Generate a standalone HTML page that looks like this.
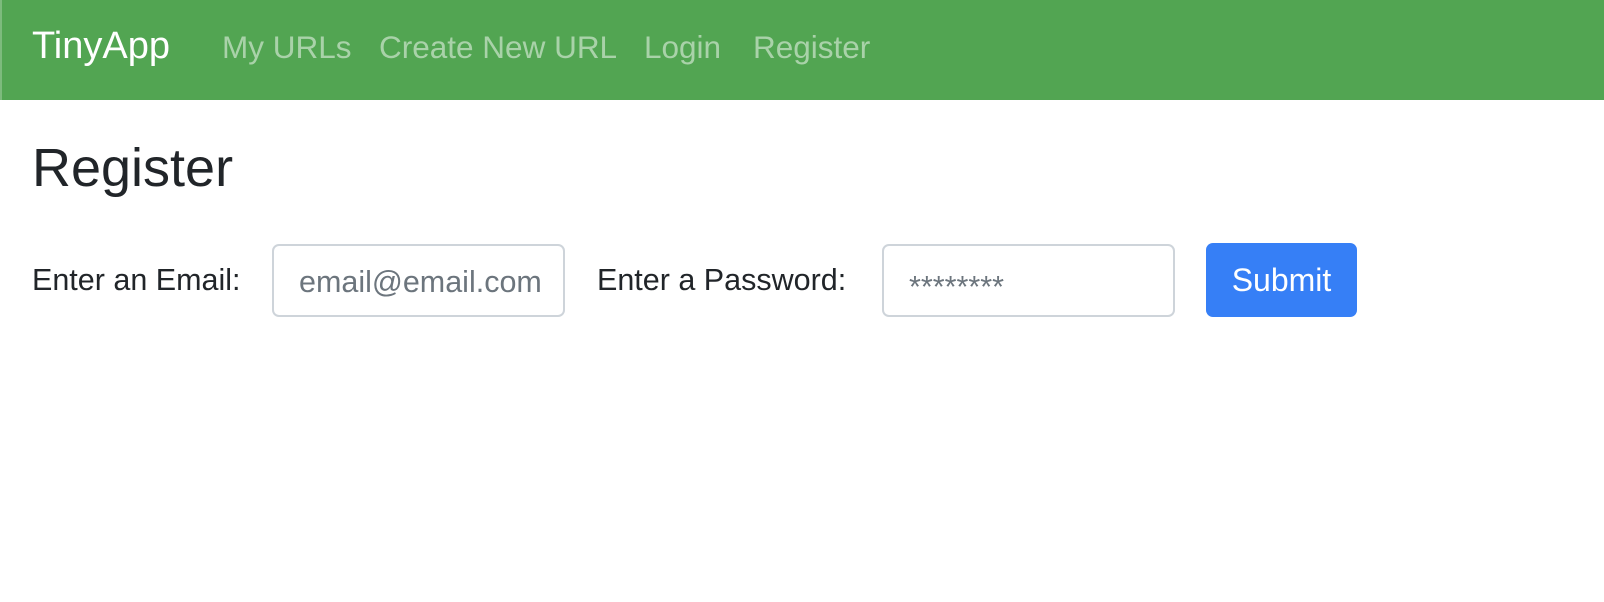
<!DOCTYPE html>
<html><head><style>
html,body{margin:0;padding:0;width:1604px;height:602px;overflow:hidden;background:#fff;font-family:"Liberation Sans",sans-serif;}
.nav{position:absolute;left:0;top:0;width:1604px;height:100px;background:#52a552;border-left:2px solid #7dbb7d;box-sizing:border-box;}
.nav span{position:absolute;top:29px;font-size:31.5px;color:rgba(255,255,255,0.5);white-space:nowrap;}
.nav .brand{color:#fff;font-size:38px;top:25px;}
h1{position:absolute;left:32px;top:137px;margin:0;font-size:54px;font-weight:500;color:#212529;}
.lbl{position:absolute;top:263px;font-size:30.5px;color:#212529;white-space:nowrap;}
.inp{position:absolute;top:244px;height:73px;width:293px;box-sizing:border-box;border:2px solid #ced4da;border-radius:7px;font-size:30.5px;color:#6c757d;padding:19px 0 0 25px;white-space:nowrap;overflow:hidden;}
.btn{position:absolute;left:1206px;top:243px;width:151px;height:74px;background:#367ff6;border-radius:7px;color:#fff;font-size:32px;text-align:center;line-height:74px;}
</style></head><body>
<div class="nav">
<span class="brand" style="left:30px">TinyApp</span>
<span style="left:220px">My URLs</span>
<span style="left:377px">Create New URL</span>
<span style="left:642px">Login</span>
<span style="left:751px">Register</span>
</div>
<h1>Register</h1>
<div class="lbl" style="left:32px">Enter an Email:</div>
<div class="inp" style="left:272px">email@email.com</div>
<div class="lbl" style="left:597px">Enter a Password:</div>
<div class="inp" style="left:882px;padding-top:24px">********</div>
<div class="btn">Submit</div>
</body></html>
